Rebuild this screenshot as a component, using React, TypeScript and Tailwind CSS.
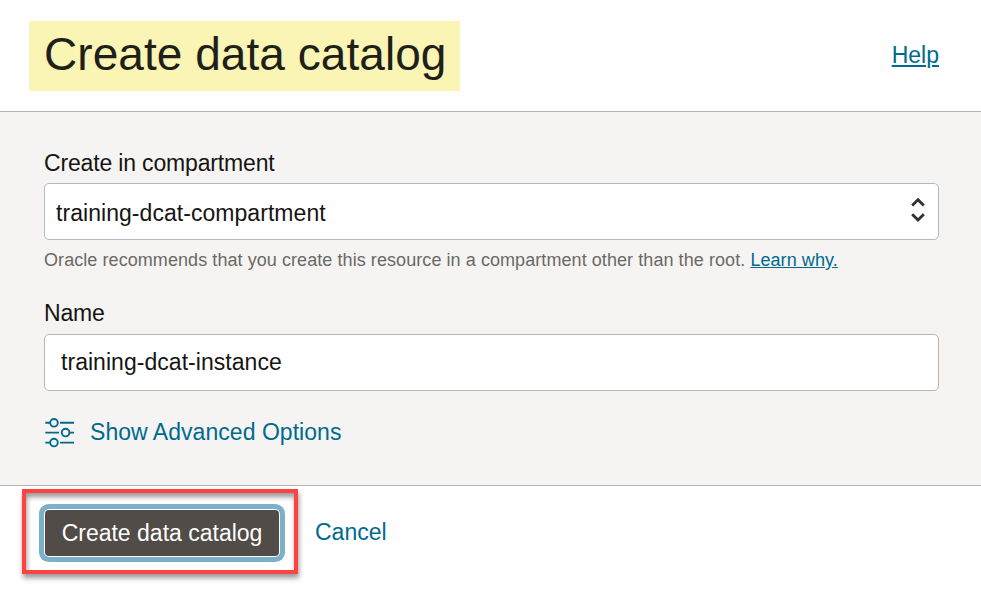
function SlidersIcon() {
  return (
    <svg width="30" height="30" viewBox="0 0 30 30" fill="none" stroke="#006a8e" strokeWidth="1.9" className="shrink-0">
      <path d="M0.3 4.8H5.3M15 4.8H29M0.3 14.6H14M24.8 14.6H29M0.3 24.6H5.3M15 24.6H29" />
      <circle cx="9" cy="4.8" r="3.8" />
      <circle cx="20.6" cy="14.6" r="3.8" />
      <circle cx="9" cy="24.6" r="3.8" />
    </svg>
  );
}

function SelectArrows() {
  return (
    <svg width="14" height="26" viewBox="0 0 14 26" fill="none" stroke="#333130" strokeWidth="2.8" className="mb-[3px]">
      <path d="M1.2 8.5L7 2.7L12.8 8.5M1.2 17.3L7 23.1L12.8 17.3" />
    </svg>
  );
}

export default function App() {
  return (
    <div className="flex h-[589px] w-[981px] flex-col overflow-hidden bg-white font-['Liberation_Sans',Arial,sans-serif] text-[23px] leading-[28px] text-[#161513]">
      <header className="flex h-[112px] shrink-0 items-start justify-between border-b border-[#b6b3ae] pr-[42px] pl-[29px] pt-[21px]">
        <h1 className="flex h-[70px] w-[431px] items-center bg-[#faf4b5] pl-[15px] pb-[4px] text-[46px] leading-[56px] tracking-[0.05px] whitespace-nowrap text-[#201f18]">
          Create data catalog
        </h1>
        <a className="mt-[20px] text-[#006a8e] underline decoration-2 underline-offset-2">Help</a>
      </header>

      <main className="flex h-[374px] shrink-0 flex-col border-b border-[#b6b3ae] bg-[#f5f4f2] pr-[42px] pl-[44px] pt-[37px]">
        <label className="tracking-[-0.16px]">Create in compartment</label>
        <div className="mt-[6px] flex h-[57px] items-center justify-between rounded-[5px] border border-[#b3b8c2] bg-white pr-[13px] pl-[11px]">
          <span className="mt-[2px] tracking-[0.05px]">training-dcat-compartment</span>
          <SelectArrows />
        </div>
        <p className="mt-[8px] text-[18px] leading-[24px] tracking-[0.07px] text-[#6b6965]">
          Oracle recommends that you create this resource in a compartment other than the root.{' '}
          <a className="text-[#006a8e] underline">Learn why.</a>
        </p>
        <label className="mt-[27px] tracking-[-0.2px]">Name</label>
        <div className="mt-[7px] flex h-[57px] items-center rounded-[5px] border border-[#bab6b0] bg-white pb-[2px] pl-[16px] tracking-[0.04px]">
          training-dcat-instance
        </div>
        <div className="mt-[27px] flex h-[30px] items-center gap-[15px] pl-px text-[#006a8e]">
          <SlidersIcon />
          <span className="pb-[2px] tracking-[0.04px]">Show Advanced Options</span>
        </div>
      </main>

      <footer className="flex items-start pl-[22px] pt-[3px]">
        <div className="h-[85px] w-[276px] border-4 border-[#ff4242] pl-[19px] pt-[17px] shadow-[1px_4px_5px_rgba(0,0,0,0.4),inset_1px_4px_5px_rgba(0,0,0,0.4)]">
          <button className="flex h-[46px] w-[234px] items-center justify-center rounded-[4px] bg-[#514c47] text-white shadow-[0_0_0_1px_#ffffff,0_0_0_6px_#7ab1c9] whitespace-nowrap">
            Create data catalog
          </button>
        </div>
        <a className="mt-[29px] ml-[17px] text-[#006a8e]">Cancel</a>
      </footer>
    </div>
  );
}
